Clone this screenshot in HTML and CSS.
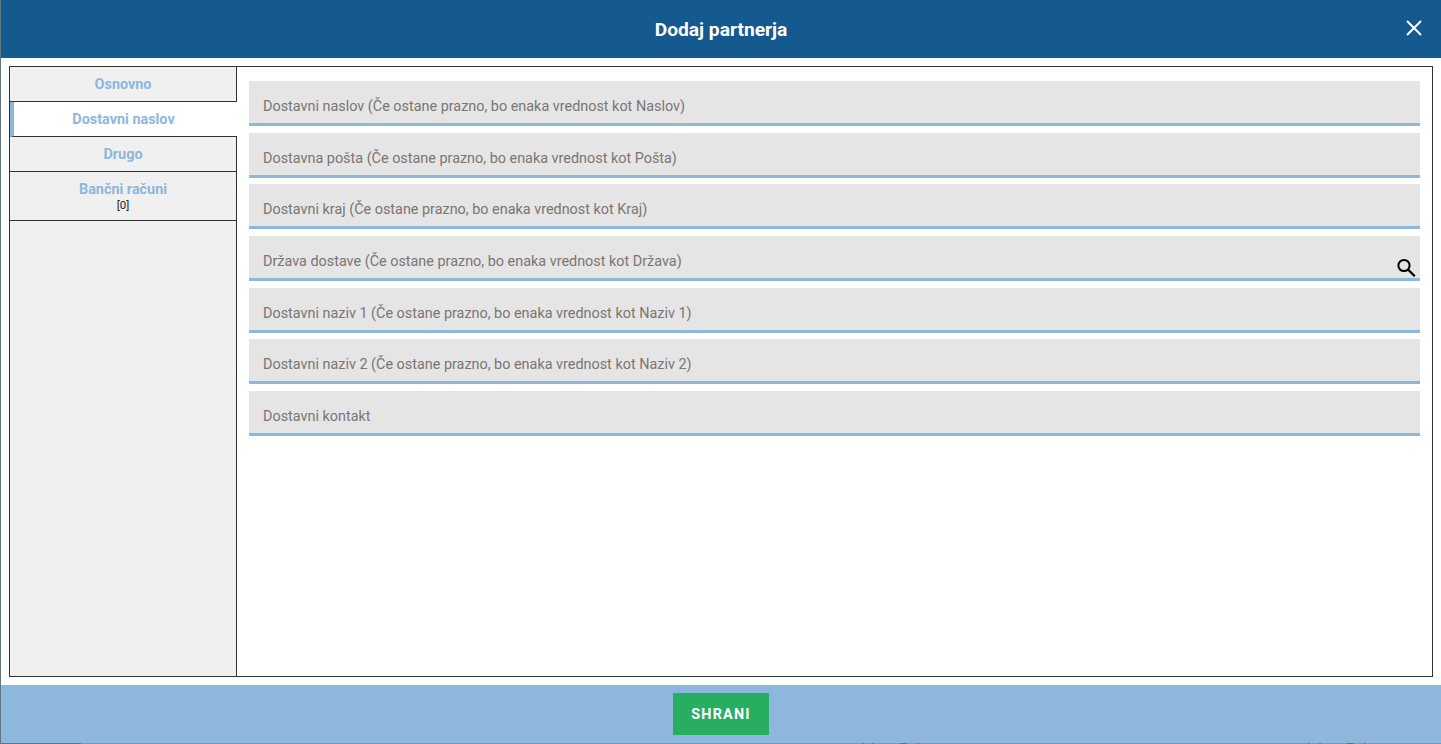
FILE: index.html
```html
<!DOCTYPE html>
<html lang="sl">
<head>
<meta charset="utf-8">
<title>Dodaj partnerja</title>
<link rel="stylesheet" href="styles.css">
</head>
<body>
<div class="modal">
  <header class="modal-head">
    <h1 class="modal-title">Dodaj partnerja</h1>
    <button class="close" type="button" aria-label="Zapri">
      <svg viewBox="0 0 16 16" width="16" height="16"><path d="M1 1L15 15M15 1L1 15" fill="none" stroke="#fff" stroke-width="2"/></svg>
    </button>
  </header>
  <main class="modal-body">
    <div class="frame">
      <nav class="tabs">
        <a class="tab">Osnovno</a>
        <a class="tab active">Dostavni naslov</a>
        <a class="tab">Drugo</a>
        <a class="tab tab-double">Bančni računi<span class="count">[0]</span></a>
      </nav>
      <section class="fields">
        <div class="field">Dostavni naslov (Če ostane prazno, bo enaka vrednost kot Naslov)</div>
        <div class="field">Dostavna pošta (Če ostane prazno, bo enaka vrednost kot Pošta)</div>
        <div class="field">Dostavni kraj (Če ostane prazno, bo enaka vrednost kot Kraj)</div>
        <div class="field">Država dostave (Če ostane prazno, bo enaka vrednost kot Država)
          <svg class="search" viewBox="0 0 20 20" width="20" height="20"><circle cx="7" cy="8.5" r="5.6" fill="none" stroke="#000" stroke-width="2"/><path d="M11 12.5L17.8 19.3" fill="none" stroke="#000" stroke-width="2.2"/></svg>
        </div>
        <div class="field">Dostavni naziv 1 (Če ostane prazno, bo enaka vrednost kot Naziv 1)</div>
        <div class="field">Dostavni naziv 2 (Če ostane prazno, bo enaka vrednost kot Naziv 2)</div>
        <div class="field">Dostavni kontakt</div>
      </section>
    </div>
  </main>
  <footer class="modal-foot">
    <button class="save" type="button">SHRANI</button>
  </footer>
</div>
</body>
</html>
```

FILE: styles.css
```css
* { box-sizing: border-box; }
html, body { margin: 0; height: 100%; overflow: hidden; }
body {
  font-family: Roboto, "Liberation Sans", sans-serif;
  background: linear-gradient(to right,
    #62757f 81px, #8f9396 81px,
    #8f9396 862px, #6f7780 862px, #6f7780 864px, #8f9396 864px,
    #8f9396 872px, #6f7780 872px, #6f7780 874px, #8f9396 874px,
    #8f9396 900px, #62757f 900px, #62757f 907px, #8f9396 907px,
    #8f9396 917px, #6f7780 917px, #6f7780 919px, #8f9396 919px,
    #8f9396 1308px, #6f7780 1308px, #6f7780 1310px, #8f9396 1310px,
    #8f9396 1319px, #6f7780 1319px, #6f7780 1321px, #8f9396 1321px,
    #8f9396 1347px, #62757f 1347px, #62757f 1354px, #8f9396 1354px,
    #8f9396 1364px, #6f7780 1364px, #6f7780 1366px, #8f9396 1366px);
}
.modal {
  height: 743px;
  border-left: 1px solid #62757f;
  display: flex;
  flex-direction: column;
  background: #fff;
}
.modal-head {
  height: 58px;
  flex: none;
  background: #155a8f;
  display: flex;
  align-items: center;
  justify-content: center;
  position: relative;
  padding-top: 2px;
}
.modal-title {
  margin: 0;
  font-size: 19.2px;
  font-weight: 700;
  color: #fff;
  line-height: 24px;
}
.close {
  position: absolute;
  top: 20px;
  right: 19px;
  width: 16px;
  height: 16px;
  padding: 0;
  border: 0;
  background: none;
  display: flex;
}
.modal-body {
  flex: 1;
  padding: 8px;
  display: flex;
  min-height: 0;
}
.frame {
  flex: 1;
  border: 1px solid #333;
  display: flex;
}
.tabs {
  width: 227px;
  flex: none;
  background: #f0f0f0;
  border-right: 1px solid #333;
}
.tab {
  display: block;
  height: 35px;
  padding-top: 10px;
  border-bottom: 1px solid #333;
  text-align: center;
  color: #8db7dd;
  font-size: 14.4px;
  font-weight: 700;
  line-height: 16px;
}
.tab.active {
  background: #fff;
  border-left: 4px solid #8db7dd;
  margin-right: -1px;
  padding-right: 4px;
  position: relative;
}
.tab-double { height: 49px; }
.count {
  display: block;
  color: #222;
  font-size: 11.5px;
  font-weight: 400;
  line-height: 12px;
  margin-top: 1px;
}
.fields {
  flex: 1;
  padding: 14px 12px 0;
  display: flex;
  flex-direction: column;
  gap: 6.65px;
}
.field {
  position: relative;
  height: 45px;
  flex: none;
  background: #e5e5e5;
  border-bottom: 3px solid #8db7dd;
  padding: 18px 14px 0;
  color: #7b7573;
  font-size: 14.4px;
  line-height: 16px;
}
.search {
  position: absolute;
  right: 3px;
  bottom: 1px;
}
.modal-foot {
  height: 58px;
  flex: none;
  background: #8db7dd;
  display: flex;
  justify-content: center;
  padding-top: 8px;
}
.save {
  width: 96px;
  height: 42px;
  border: 0;
  padding: 0 0 0 1px;
  background: #27ae60;
  color: #fff;
  font-family: inherit;
  font-size: 14.4px;
  font-weight: 700;
  letter-spacing: 1.2px;
  margin-left: -1px;
}
```
